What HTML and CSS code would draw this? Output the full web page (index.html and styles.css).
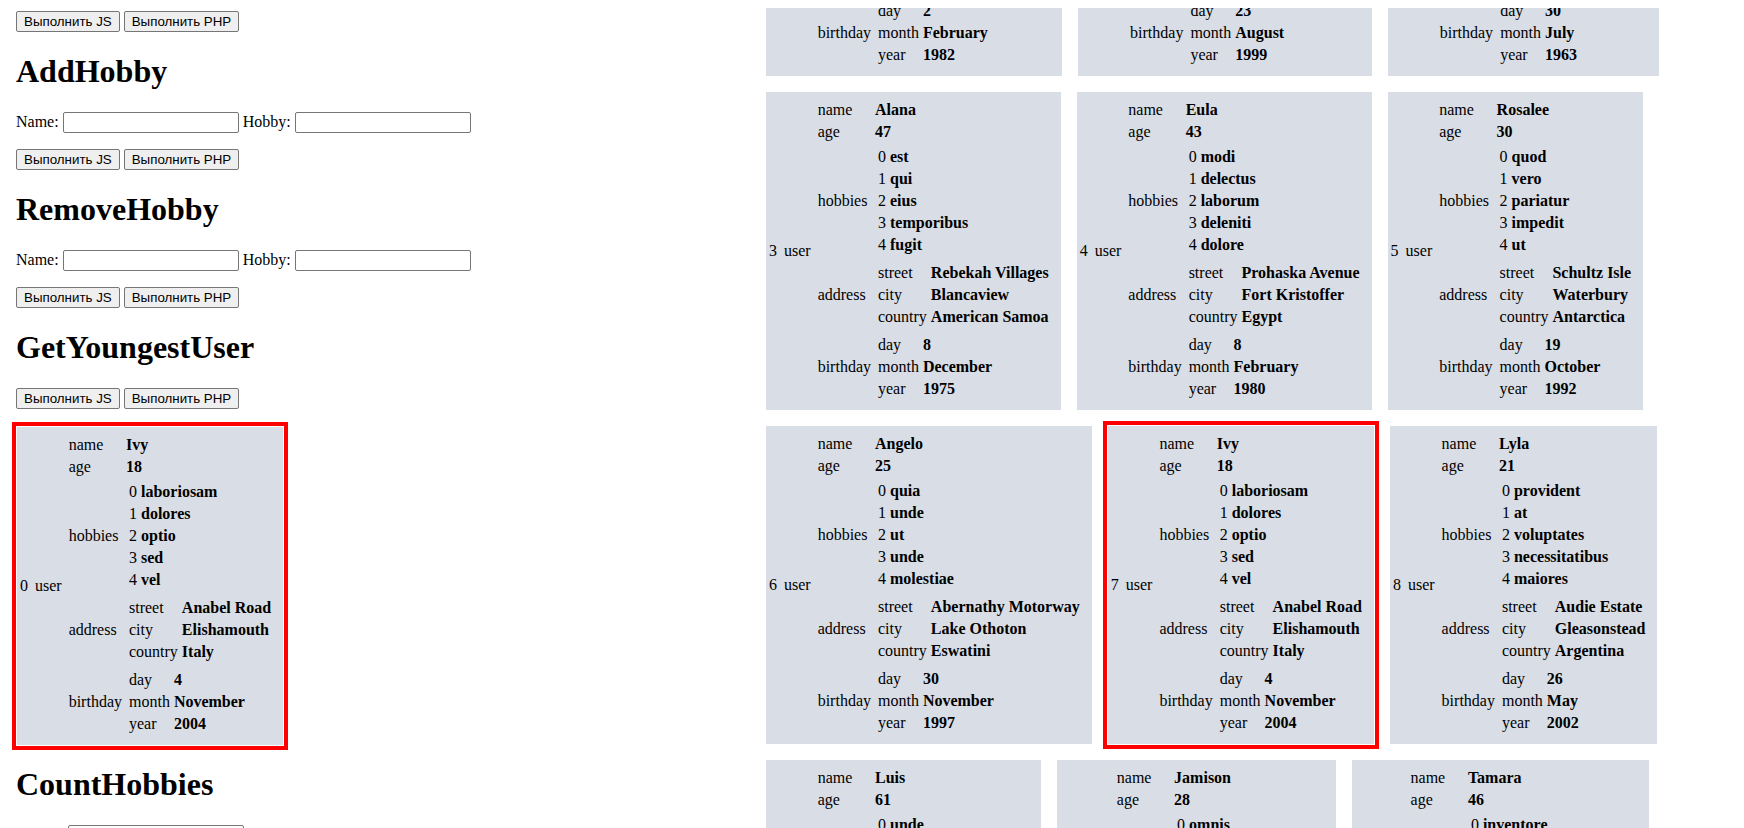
FILE: index.html
```html
<!DOCTYPE html>
<html lang="ru">
<head>
<meta charset="utf-8">
<title>Users</title>
<link rel="stylesheet" href="styles.css">
</head>
<body>
<div class="page">
  <div class="forms">
    <div class="row first"><button class="btn">Выполнить JS</button><button class="btn">Выполнить PHP</button></div>

    <h1 class="title">AddHobby</h1>
    <div class="row">Name: <input class="field" type="text"> Hobby: <input class="field" type="text"></div>
    <div class="row"><button class="btn">Выполнить JS</button><button class="btn">Выполнить PHP</button></div>

    <h1 class="title">RemoveHobby</h1>
    <div class="row">Name: <input class="field" type="text"> Hobby: <input class="field" type="text"></div>
    <div class="row"><button class="btn">Выполнить JS</button><button class="btn">Выполнить PHP</button></div>

    <h1 class="title">GetYoungestUser</h1>
    <div class="row"><button class="btn">Выполнить JS</button><button class="btn">Выполнить PHP</button></div>
    <div class="result">
      <table class="card hl"><tr><td>0</td><td><table><tr><td>user</td><td><table>
        <tr><td>name</td><td><b>Ivy</b></td></tr>
        <tr><td>age</td><td><b>18</b></td></tr>
        <tr><td>hobbies</td><td><table><tr><td>0</td><td><b>laboriosam</b></td></tr><tr><td>1</td><td><b>dolores</b></td></tr><tr><td>2</td><td><b>optio</b></td></tr><tr><td>3</td><td><b>sed</b></td></tr><tr><td>4</td><td><b>vel</b></td></tr></table></td></tr>
        <tr><td>address</td><td><table><tr><td>street</td><td><b>Anabel Road</b></td></tr><tr><td>city</td><td><b>Elishamouth</b></td></tr><tr><td>country</td><td><b>Italy</b></td></tr></table></td></tr>
        <tr><td>birthday</td><td><table><tr><td>day</td><td><b>4</b></td></tr><tr><td>month</td><td><b>November</b></td></tr><tr><td>year</td><td><b>2004</b></td></tr></table></td></tr>
      </table></td></tr></table></td></tr></table>
    </div>

    <h1 class="title">CountHobbies</h1>
    <div class="row">Hobby: <input class="field" type="text"></div>
  </div>

  <div class="users">
    <table class="card"><tr><td>0</td><td><table><tr><td>user</td><td><table>
      <tr><td>name</td><td><b>Kasey</b></td></tr>
      <tr><td>age</td><td><b>34</b></td></tr>
      <tr><td>hobbies</td><td><table><tr><td>0</td><td><b>quis</b></td></tr><tr><td>1</td><td><b>aut</b></td></tr><tr><td>2</td><td><b>nihil</b></td></tr><tr><td>3</td><td><b>ratione</b></td></tr><tr><td>4</td><td><b>sint</b></td></tr></table></td></tr>
      <tr><td>address</td><td><table><tr><td>street</td><td><b>Koelpin Terrace</b></td></tr><tr><td>city</td><td><b>Port Aliyah</b></td></tr><tr><td>country</td><td><b>Saint Barthelemy</b></td></tr></table></td></tr>
      <tr><td>birthday</td><td><table><tr><td>day</td><td><b>2</b></td></tr><tr><td>month</td><td><b>February</b></td></tr><tr><td>year</td><td><b>1982</b></td></tr></table></td></tr>
    </table></td></tr></table></td></tr></table>

    <table class="card"><tr><td>1</td><td><table><tr><td>user</td><td><table>
      <tr><td>name</td><td><b>Orval</b></td></tr>
      <tr><td>age</td><td><b>25</b></td></tr>
      <tr><td>hobbies</td><td><table><tr><td>0</td><td><b>et</b></td></tr><tr><td>1</td><td><b>rem</b></td></tr><tr><td>2</td><td><b>dicta</b></td></tr><tr><td>3</td><td><b>magnam</b></td></tr><tr><td>4</td><td><b>eos</b></td></tr></table></td></tr>
      <tr><td>address</td><td><table><tr><td>street</td><td><b>Ferry Mountains</b></td></tr><tr><td>city</td><td><b>Lake Wilfred</b></td></tr><tr><td>country</td><td><b>Norway</b></td></tr></table></td></tr>
      <tr><td>birthday</td><td><table><tr><td>day</td><td><b>23</b></td></tr><tr><td>month</td><td><b>August</b></td></tr><tr><td>year</td><td><b>1999</b></td></tr></table></td></tr>
    </table></td></tr></table></td></tr></table>

    <table class="card"><tr><td>2</td><td><table><tr><td>user</td><td><table>
      <tr><td>name</td><td><b>Maye</b></td></tr>
      <tr><td>age</td><td><b>61</b></td></tr>
      <tr><td>hobbies</td><td><table><tr><td>0</td><td><b>enim</b></td></tr><tr><td>1</td><td><b>non</b></td></tr><tr><td>2</td><td><b>velit</b></td></tr><tr><td>3</td><td><b>iusto</b></td></tr><tr><td>4</td><td><b>minus</b></td></tr></table></td></tr>
      <tr><td>address</td><td><table><tr><td>street</td><td><b>Wiza Squares</b></td></tr><tr><td>city</td><td><b>Bodeberg</b></td></tr><tr><td>country</td><td><b>Peru</b></td></tr></table></td></tr>
      <tr><td>birthday</td><td><table><tr><td>day</td><td><b>30</b></td></tr><tr><td>month</td><td><b>July</b></td></tr><tr><td>year</td><td><b>1963</b></td></tr></table></td></tr>
    </table></td></tr></table></td></tr></table>

    <table class="card"><tr><td>3</td><td><table><tr><td>user</td><td><table>
      <tr><td>name</td><td><b>Alana</b></td></tr>
      <tr><td>age</td><td><b>47</b></td></tr>
      <tr><td>hobbies</td><td><table><tr><td>0</td><td><b>est</b></td></tr><tr><td>1</td><td><b>qui</b></td></tr><tr><td>2</td><td><b>eius</b></td></tr><tr><td>3</td><td><b>temporibus</b></td></tr><tr><td>4</td><td><b>fugit</b></td></tr></table></td></tr>
      <tr><td>address</td><td><table><tr><td>street</td><td><b>Rebekah Villages</b></td></tr><tr><td>city</td><td><b>Blancaview</b></td></tr><tr><td>country</td><td><b>American Samoa</b></td></tr></table></td></tr>
      <tr><td>birthday</td><td><table><tr><td>day</td><td><b>8</b></td></tr><tr><td>month</td><td><b>December</b></td></tr><tr><td>year</td><td><b>1975</b></td></tr></table></td></tr>
    </table></td></tr></table></td></tr></table>

    <table class="card"><tr><td>4</td><td><table><tr><td>user</td><td><table>
      <tr><td>name</td><td><b>Eula</b></td></tr>
      <tr><td>age</td><td><b>43</b></td></tr>
      <tr><td>hobbies</td><td><table><tr><td>0</td><td><b>modi</b></td></tr><tr><td>1</td><td><b>delectus</b></td></tr><tr><td>2</td><td><b>laborum</b></td></tr><tr><td>3</td><td><b>deleniti</b></td></tr><tr><td>4</td><td><b>dolore</b></td></tr></table></td></tr>
      <tr><td>address</td><td><table><tr><td>street</td><td><b>Prohaska Avenue</b></td></tr><tr><td>city</td><td><b>Fort Kristoffer</b></td></tr><tr><td>country</td><td><b>Egypt</b></td></tr></table></td></tr>
      <tr><td>birthday</td><td><table><tr><td>day</td><td><b>8</b></td></tr><tr><td>month</td><td><b>February</b></td></tr><tr><td>year</td><td><b>1980</b></td></tr></table></td></tr>
    </table></td></tr></table></td></tr></table>

    <table class="card"><tr><td>5</td><td><table><tr><td>user</td><td><table>
      <tr><td>name</td><td><b>Rosalee</b></td></tr>
      <tr><td>age</td><td><b>30</b></td></tr>
      <tr><td>hobbies</td><td><table><tr><td>0</td><td><b>quod</b></td></tr><tr><td>1</td><td><b>vero</b></td></tr><tr><td>2</td><td><b>pariatur</b></td></tr><tr><td>3</td><td><b>impedit</b></td></tr><tr><td>4</td><td><b>ut</b></td></tr></table></td></tr>
      <tr><td>address</td><td><table><tr><td>street</td><td><b>Schultz Isle</b></td></tr><tr><td>city</td><td><b>Waterbury</b></td></tr><tr><td>country</td><td><b>Antarctica</b></td></tr></table></td></tr>
      <tr><td>birthday</td><td><table><tr><td>day</td><td><b>19</b></td></tr><tr><td>month</td><td><b>October</b></td></tr><tr><td>year</td><td><b>1992</b></td></tr></table></td></tr>
    </table></td></tr></table></td></tr></table>

    <table class="card"><tr><td>6</td><td><table><tr><td>user</td><td><table>
      <tr><td>name</td><td><b>Angelo</b></td></tr>
      <tr><td>age</td><td><b>25</b></td></tr>
      <tr><td>hobbies</td><td><table><tr><td>0</td><td><b>quia</b></td></tr><tr><td>1</td><td><b>unde</b></td></tr><tr><td>2</td><td><b>ut</b></td></tr><tr><td>3</td><td><b>unde</b></td></tr><tr><td>4</td><td><b>molestiae</b></td></tr></table></td></tr>
      <tr><td>address</td><td><table><tr><td>street</td><td><b>Abernathy Motorway</b></td></tr><tr><td>city</td><td><b>Lake Othoton</b></td></tr><tr><td>country</td><td><b>Eswatini</b></td></tr></table></td></tr>
      <tr><td>birthday</td><td><table><tr><td>day</td><td><b>30</b></td></tr><tr><td>month</td><td><b>November</b></td></tr><tr><td>year</td><td><b>1997</b></td></tr></table></td></tr>
    </table></td></tr></table></td></tr></table>

    <table class="card hl"><tr><td>7</td><td><table><tr><td>user</td><td><table>
      <tr><td>name</td><td><b>Ivy</b></td></tr>
      <tr><td>age</td><td><b>18</b></td></tr>
      <tr><td>hobbies</td><td><table><tr><td>0</td><td><b>laboriosam</b></td></tr><tr><td>1</td><td><b>dolores</b></td></tr><tr><td>2</td><td><b>optio</b></td></tr><tr><td>3</td><td><b>sed</b></td></tr><tr><td>4</td><td><b>vel</b></td></tr></table></td></tr>
      <tr><td>address</td><td><table><tr><td>street</td><td><b>Anabel Road</b></td></tr><tr><td>city</td><td><b>Elishamouth</b></td></tr><tr><td>country</td><td><b>Italy</b></td></tr></table></td></tr>
      <tr><td>birthday</td><td><table><tr><td>day</td><td><b>4</b></td></tr><tr><td>month</td><td><b>November</b></td></tr><tr><td>year</td><td><b>2004</b></td></tr></table></td></tr>
    </table></td></tr></table></td></tr></table>

    <table class="card"><tr><td>8</td><td><table><tr><td>user</td><td><table>
      <tr><td>name</td><td><b>Lyla</b></td></tr>
      <tr><td>age</td><td><b>21</b></td></tr>
      <tr><td>hobbies</td><td><table><tr><td>0</td><td><b>provident</b></td></tr><tr><td>1</td><td><b>at</b></td></tr><tr><td>2</td><td><b>voluptates</b></td></tr><tr><td>3</td><td><b>necessitatibus</b></td></tr><tr><td>4</td><td><b>maiores</b></td></tr></table></td></tr>
      <tr><td>address</td><td><table><tr><td>street</td><td><b>Audie Estate</b></td></tr><tr><td>city</td><td><b>Gleasonstead</b></td></tr><tr><td>country</td><td><b>Argentina</b></td></tr></table></td></tr>
      <tr><td>birthday</td><td><table><tr><td>day</td><td><b>26</b></td></tr><tr><td>month</td><td><b>May</b></td></tr><tr><td>year</td><td><b>2002</b></td></tr></table></td></tr>
    </table></td></tr></table></td></tr></table>

    <table class="card"><tr><td>9</td><td><table><tr><td>user</td><td><table>
      <tr><td>name</td><td><b>Luis</b></td></tr>
      <tr><td>age</td><td><b>61</b></td></tr>
      <tr><td>hobbies</td><td><table><tr><td>0</td><td><b>unde</b></td></tr><tr><td>1</td><td><b>aliquid</b></td></tr><tr><td>2</td><td><b>quas</b></td></tr><tr><td>3</td><td><b>odio</b></td></tr><tr><td>4</td><td><b>nemo</b></td></tr></table></td></tr>
      <tr><td>address</td><td><table><tr><td>street</td><td><b>Hane Landing</b></td></tr><tr><td>city</td><td><b>West Ruby</b></td></tr><tr><td>country</td><td><b>Chile</b></td></tr></table></td></tr>
      <tr><td>birthday</td><td><table><tr><td>day</td><td><b>14</b></td></tr><tr><td>month</td><td><b>March</b></td></tr><tr><td>year</td><td><b>1963</b></td></tr></table></td></tr>
    </table></td></tr></table></td></tr></table>

    <table class="card"><tr><td>10</td><td><table><tr><td>user</td><td><table>
      <tr><td>name</td><td><b>Jamison</b></td></tr>
      <tr><td>age</td><td><b>28</b></td></tr>
      <tr><td>hobbies</td><td><table><tr><td>0</td><td><b>omnis</b></td></tr><tr><td>1</td><td><b>illo</b></td></tr><tr><td>2</td><td><b>sunt</b></td></tr><tr><td>3</td><td><b>earum</b></td></tr><tr><td>4</td><td><b>totam</b></td></tr></table></td></tr>
      <tr><td>address</td><td><table><tr><td>street</td><td><b>Bode Squares</b></td></tr><tr><td>city</td><td><b>Gislasonview</b></td></tr><tr><td>country</td><td><b>Ghana</b></td></tr></table></td></tr>
      <tr><td>birthday</td><td><table><tr><td>day</td><td><b>5</b></td></tr><tr><td>month</td><td><b>June</b></td></tr><tr><td>year</td><td><b>1996</b></td></tr></table></td></tr>
    </table></td></tr></table></td></tr></table>

    <table class="card"><tr><td>11</td><td><table><tr><td>user</td><td><table>
      <tr><td>name</td><td><b>Tamara</b></td></tr>
      <tr><td>age</td><td><b>46</b></td></tr>
      <tr><td>hobbies</td><td><table><tr><td>0</td><td><b>inventore</b></td></tr><tr><td>1</td><td><b>eum</b></td></tr><tr><td>2</td><td><b>ab</b></td></tr><tr><td>3</td><td><b>nisi</b></td></tr><tr><td>4</td><td><b>odit</b></td></tr></table></td></tr>
      <tr><td>address</td><td><table><tr><td>street</td><td><b>Brown Turnpike</b></td></tr><tr><td>city</td><td><b>Lake Tressie</b></td></tr><tr><td>country</td><td><b>Latvia</b></td></tr></table></td></tr>
      <tr><td>birthday</td><td><table><tr><td>day</td><td><b>11</b></td></tr><tr><td>month</td><td><b>April</b></td></tr><tr><td>year</td><td><b>1978</b></td></tr></table></td></tr>
    </table></td></tr></table></td></tr></table>
  </div>
</div>
</body>
</html>
```

FILE: styles.css
```css
html {
  overflow: hidden;
}

body {
  margin: 8px;
  font-family: "Liberation Serif", "Times New Roman", serif;
  font-size: 16px;
  color: #000;
  background: #fff;
}

.page {
  display: grid;
  grid-template-columns: 758px 1fr;
  align-items: start;
}

.forms {
  padding: 0 8px;
}

.title {
  font-size: 32px;
  font-weight: bold;
  margin: 21.44px 0;
}

.row {
  display: flex;
  align-items: center;
  gap: 4px;
  height: 21px;
  margin: 16px 0;
}

.row.first {
  margin-top: 3px;
}

.btn {
  font: 13.333px "Liberation Sans", Arial, sans-serif;
  color: #000;
  height: 21px;
  box-sizing: border-box;
  padding: 1px 7px;
  border: 1px solid #767676;
  border-radius: 2px;
  background: #efefef;
}

.field {
  width: 176px;
  height: 21px;
  box-sizing: border-box;
  padding: 1px 2px;
  border: 1px solid #767676;
  border-radius: 2px;
  font: 13.333px "Liberation Sans", Arial, sans-serif;
  background: #fff;
}

.result {
  display: flex;
  margin: 18px 0;
  padding-left: 1px;
}

.users {
  display: flex;
  flex-wrap: wrap;
  align-items: flex-start;
  gap: 16px;
  margin-top: -250px;
}

.card {
  background: #d9dde5;
}

.card.hl {
  outline: 4px solid #f00;
  outline-offset: 1px;
}
```
